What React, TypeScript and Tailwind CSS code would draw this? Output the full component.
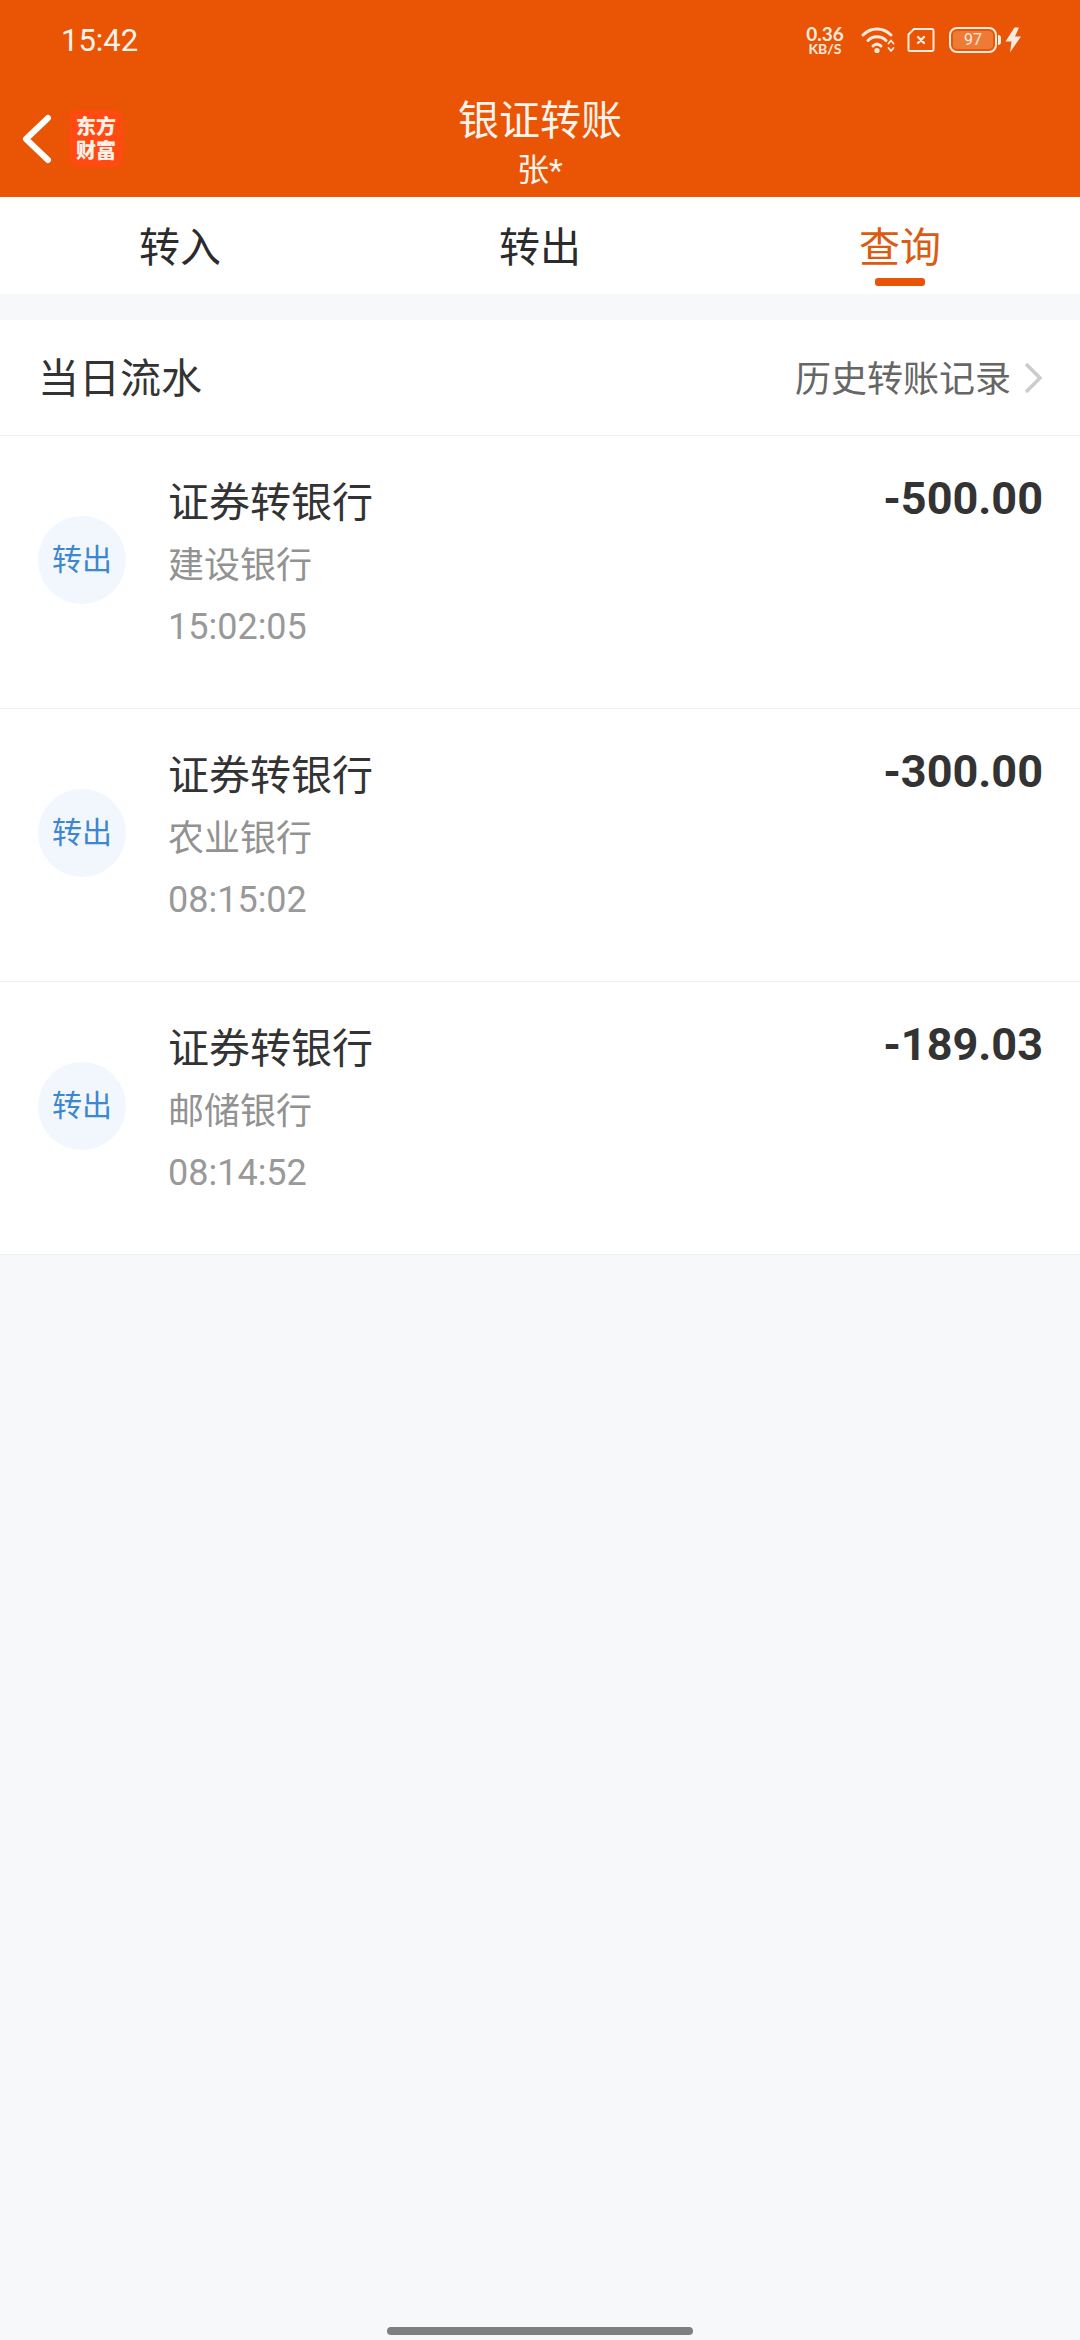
const ROWS = [
  { bank: '建设银行', time: '15:02:05', amount: '-500.00' },
  { bank: '农业银行', time: '08:15:02', amount: '-300.00' },
  { bank: '邮储银行', time: '08:14:52', amount: '-189.03' },
]

const CJK = "font-['Roboto','Noto_Sans_CJK_SC',sans-serif]"

function StatusIcons() {
  return (
    <div className="flex items-center text-[#fbeadf]">
      {/* speed */}
      <div className="flex w-[44px] flex-col items-center font-['Lato',sans-serif] font-bold">
        <span className="text-[19px] leading-[16px]">0.36</span>
        <span className="text-[14px] leading-[13px]">KB/S</span>
      </div>
      {/* wifi */}
      <svg width="34" height="28" viewBox="0 0 34 28" fill="none" className="ml-[14px]">
        <path d="M2 9 C10 1 22 1 30 9" stroke="currentColor" strokeWidth="3" strokeLinecap="round" />
        <path d="M7 14.5 C12 9.5 20 9.5 25 14.5" stroke="currentColor" strokeWidth="3" strokeLinecap="round" />
        <path d="M12 20 C14.5 17.5 17.5 17.5 20 20" stroke="currentColor" strokeWidth="3" strokeLinecap="round" />
        <circle cx="16" cy="24.5" r="2.6" fill="currentColor" />
        <path d="M27.5 17.5 L30 14.5 L32.5 17.5 M27.5 22 L30 25 L32.5 22" stroke="currentColor" strokeWidth="1.8" strokeLinecap="round" strokeLinejoin="round" />
      </svg>
      {/* sim, none */}
      <svg width="28" height="26" viewBox="0 0 28 26" fill="none" className="ml-[12px]">
        <path d="M7 2 H25 A1.5 1.5 0 0 1 26.5 3.5 V22.5 A1.5 1.5 0 0 1 25 24 H3 A1.5 1.5 0 0 1 1.5 22.5 V7.5 Z" stroke="currentColor" strokeWidth="2" strokeLinejoin="round" />
        <path d="M11 10 L17 16 M17 10 L11 16" stroke="currentColor" strokeWidth="2.4" strokeLinecap="round" />
      </svg>
      {/* battery */}
      <div className="ml-[14px] flex items-center">
        <div className="flex h-[26px] w-[48px] items-center justify-center rounded-[8px] border-2 border-[#fbeadf] p-[2px]">
          <div className="flex h-full w-full items-center justify-center rounded-[4px] bg-[#ed7a35] font-['Roboto',sans-serif] text-[16px] leading-none">
            97
          </div>
        </div>
        <div className="ml-[1px] h-[10px] w-[3px] rounded-r-sm bg-[#fbeadf]" />
      </div>
      <svg width="17" height="26" viewBox="0 0 17 26" fill="currentColor" className="ml-[4px]">
        <path d="M9.5 0.5 L0.5 14.5 H6.5 L5 25.5 L16 9.5 H10 L14 0.5 Z" />
      </svg>
    </div>
  )
}

function Row({ bank, time, amount }: { bank: string; time: string; amount: string }) {
  return (
    <div className="flex h-[273px] border-b border-[#eeeff1] bg-white pl-[38px] pr-[37px]">
      <div className="mt-[80px] flex h-[88px] w-[88px] shrink-0 items-center justify-center self-start rounded-full bg-[#f2f7fd] text-[30px] leading-none text-[#3d86d0]">
        转出
      </div>
      <div className="ml-[42px] flex flex-1 flex-col pt-[39px]">
        <div className="text-[41px] leading-[56px] text-[#333333]">证券转银行</div>
        <div className="mt-[11px] text-[36px] leading-[48px] text-[#929292]">{bank}</div>
        <div className="mt-[13px] text-[36px] leading-[48px] text-[#999999]">{time}</div>
      </div>
      <div className="pt-[37px] text-[45px] font-bold leading-[52px] text-[#333333]">{amount}</div>
    </div>
  )
}

export default function App() {
  return (
    <div className={`relative flex min-h-[2340px] w-[1080px] flex-col bg-[#f7f8fa] ${CJK}`}>
      <div className="h-[197px] bg-[#e95504]">
        <div className="flex h-[80px] items-center justify-between pl-[61px] pr-[58px]">
          <span className="text-[31px] leading-none text-[#fdf3ec]">15:42</span>
          <StatusIcons />
        </div>
        <div className="relative flex h-[117px] items-start justify-center">
          <div className="absolute left-[21px] top-[30px] flex items-center">
            <svg width="32" height="50" viewBox="0 0 32 50" fill="none">
              <path d="M27 4 L5 25 L27 46" stroke="#ffffff" strokeWidth="6" strokeLinecap="round" strokeLinejoin="round" />
            </svg>
            <div className="ml-[16px] flex h-[57px] w-[54px] flex-col items-center justify-center rounded-[10px] bg-[#ff4a12] text-[20px] font-black leading-[24px] text-[#fff1e8]">
              <span>东方</span>
              <span>财富</span>
            </div>
          </div>
          <div className="flex flex-col items-center text-[#fdf3ec]">
            <span className="mt-[13px] text-[41px] leading-[56px]">银证转账</span>
            <span className="mt-[3px] text-[32px] leading-[36px]">张*</span>
          </div>
        </div>
      </div>

      <div className="grid h-[97px] grid-cols-3 bg-white text-[41px] text-[#2b2b2b]">
        <div className="flex justify-center pt-[23px] leading-[56px]">转入</div>
        <div className="flex justify-center pt-[23px] leading-[56px]">转出</div>
        <div className="flex flex-col items-center pt-[23px] leading-[56px] text-[#dd5a12]">
          <span>查询</span>
          <div className="mt-[2px] h-[8px] w-[50px] rounded-[3px] bg-[#e95504]" />
        </div>
      </div>

      <div className="mt-[26px] flex h-[116px] items-center justify-between border-b border-[#eeeff1] bg-white pl-[38px] pr-[37px]">
        <span className="mt-[4px] text-[41px] leading-none text-[#333333]">当日流水</span>
        <div className="flex items-center">
          <span className="mt-[4px] text-[36px] leading-none text-[#666666]">历史转账记录</span>
          <svg width="20" height="34" viewBox="0 0 20 34" fill="none" className="ml-[12px]">
            <path d="M3 3 L17 17 L3 31" stroke="#cccccc" strokeWidth="3.5" />
          </svg>
        </div>
      </div>

      {ROWS.map((r) => (
        <Row key={r.time} {...r} />
      ))}

      <div className="absolute bottom-[5px] left-[387px] h-[8px] w-[306px] rounded-full bg-[#7f7f7f]" />
    </div>
  )
}
